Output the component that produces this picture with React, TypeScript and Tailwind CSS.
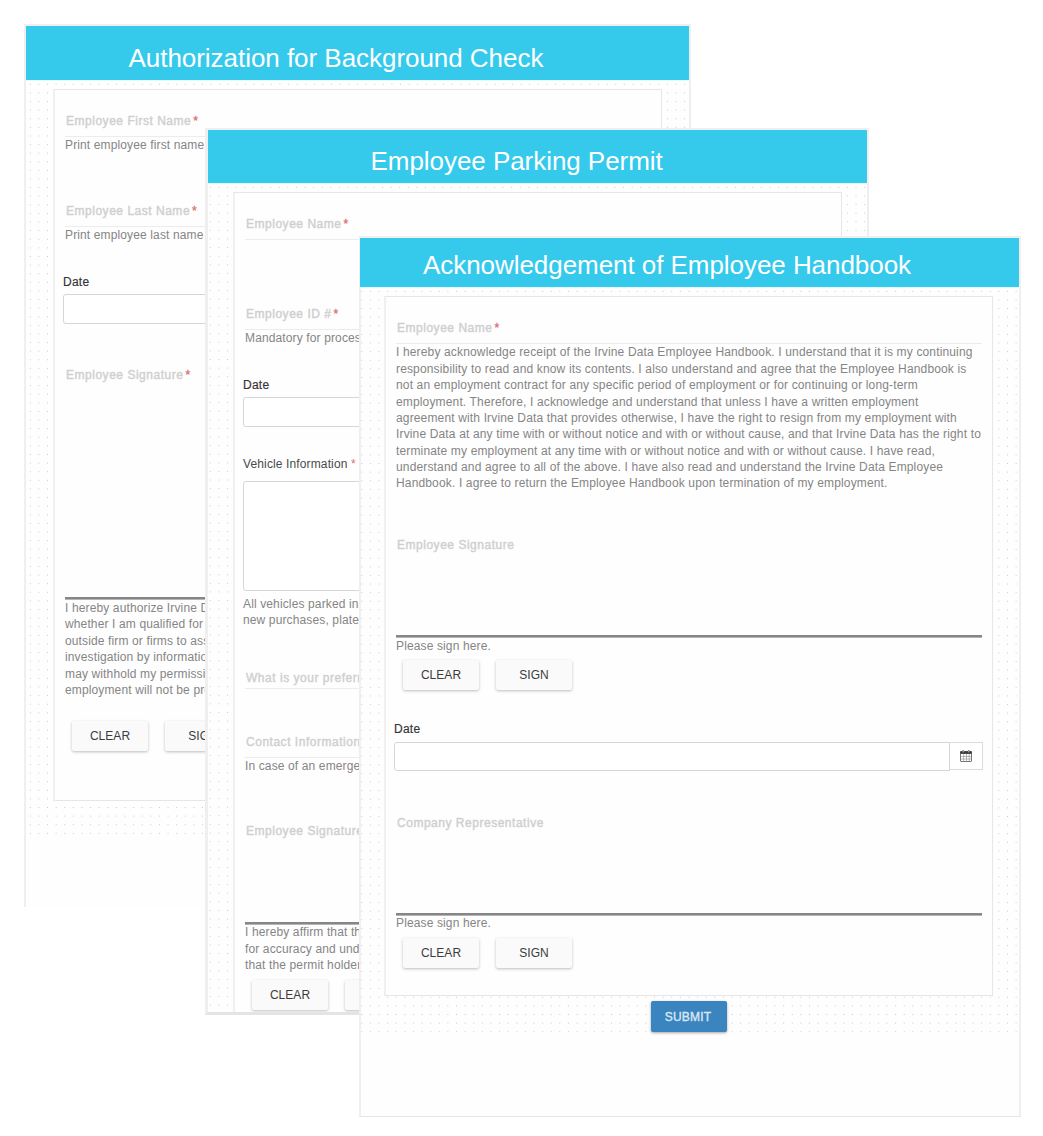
import React from "react";

type Node = React.ReactNode;

const Title = ({ className, children }: { className: string; children: Node }) => (
  <div className={`bg-[#35caec] text-[26px] leading-8 text-white whitespace-nowrap shrink-0 ${className}`}>{children}</div>
);

const Dots = ({ className, children }: { className: string; children: Node }) => (
  <div
    className={`border-t border-[#e6f8fc] bg-[radial-gradient(circle,#c8c8c8_0.3px,transparent_0.93px)] bg-[length:8.62px_8.62px] ${className}`}
  >
    {children}
  </div>
);

const Label = ({ className, required, children }: { className: string; required?: boolean; children: Node }) => (
  <div
    className={`h-4 leading-4 text-[#cfcfcf] [-webkit-text-stroke:0.4px_#cfcfcf] tracking-[0.52px] whitespace-nowrap ${className}`}
  >
    {children}
    {required && <span className="text-[#d9706c] [-webkit-text-stroke:0.3px_#d9706c] ml-[2px]">*</span>}
  </div>
);

const Rule = ({ className }: { className: string }) => <div className={`h-px bg-[#ececec] ${className}`} />;

const SignatureLine = ({ className }: { className: string }) => (
  <div className={`h-[3px] border-b border-[#b4b4b4] bg-[#868686] ${className}`} />
);

const Lines = ({ className, lines }: { className: string; lines: string[] }) => (
  <div className={`text-[#858585] whitespace-nowrap ${className}`}>
    {lines.map((l) => (
      <div key={l} className="h-[16.38px] leading-[16.38px]">{l}</div>
    ))}
  </div>
);

const Help = ({ className, children }: { className: string; children: Node }) => (
  <div className={`h-4 leading-4 text-[#858585] whitespace-nowrap ${className}`}>{children}</div>
);

const Buttons = ({ className }: { className: string }) => (
  <div className={`flex gap-[17px] ${className}`}>
    {["CLEAR", "SIGN"].map((t) => (
      <button
        key={t}
        className="w-[76px] h-[30px] shrink-0 rounded-[2px] bg-[#fafafa] text-[#3c3c3c] tracking-[0.04px] shadow-[0_1px_3px_rgba(0,0,0,0.26)]"
      >
        {t}
      </button>
    ))}
  </div>
);

const Caption = ({ className, children }: { className: string; children: Node }) => (
  <div className={`h-4 leading-4 whitespace-nowrap ${className}`}>{children}</div>
);

const CalendarIcon = () => (
  <svg width="12" height="12" viewBox="0 0 12 12" fill="none">
    <rect x="0.5" y="1.5" width="11" height="10" rx="0.5" stroke="#666" strokeWidth="0.9" />
    <rect x="0.3" y="1.3" width="11.4" height="2.6" fill="#3a3a3a" />
    <path d="M3.7 4v7.5M6.5 4v7.5M9.2 4v7.5M0.5 6.5h11M0.5 9h11" stroke="#888" strokeWidth="0.6" />
    <path d="M3.2 0.2v2.4M8.8 0.2v2.4" stroke="#555" strokeWidth="1.6" />
    <path d="M3.2 0.7v1.6M8.8 0.7v1.6" stroke="#ddd" strokeWidth="0.7" />
  </svg>
);

function BackgroundCheck() {
  return (
    <section className="absolute left-6 top-6 w-[667px] h-[883px] border-2 border-b-0 border-[#efefef] bg-[#fefefe]">
      <Title className="h-[54px] pt-4 pl-[102.5px] tracking-[-0.04px]">Authorization for Background Check</Title>
      <Dots className="h-[759px] pt-2 pl-[27px] bg-position-[0px_-1px]">
        <div className="flex flex-col w-[609px] h-[712px] border border-l-2 border-[#e6e6e6] border-l-[#f0f0f0] bg-[#fefefe]">
          <Label required className="mt-[23px] ml-[11px]">Employee First Name</Label>
          <Rule className="mt-[7px] mx-[10px]" />
          <Help className="ml-[10px]">Print employee first name</Help>
          <Label required className="mt-[50px] ml-[11px]">Employee Last Name</Label>
          <Rule className="mt-[7px] mx-[10px]" />
          <Help className="ml-[10px]">Print employee last name</Help>
          <Caption className="mt-[31px] ml-2 text-[#333] [-webkit-text-stroke:0.15px_#333] tracking-[0.25px]">Date</Caption>
          <div className="mt-1 mx-2 h-[30px] border border-[#d6d6d6] rounded-[3px] bg-white" />
          <Label required className="mt-[43px] ml-[11px]">Employee Signature</Label>
          <SignatureLine className="mt-[214px] mx-[10px]" />
          <Lines
            className="ml-[10px]"
            lines={[
              "I hereby authorize Irvine Data",
              "whether I am qualified for the",
              "outside firm or firms to assist",
              "investigation by information",
              "may withhold my permission",
              "employment will not be pro",
            ]}
          />
          <Buttons className="mt-[23px] ml-[17px]" />
        </div>
      </Dots>
    </section>
  );
}

function ParkingPermit() {
  return (
    <section className="absolute left-[205px] top-[128px] w-[664px] h-[887px] border-2 border-l-3 border-b-3 border-[#efefef] border-b-[#e4e4e4] bg-[#fefefe] overflow-hidden">
      <Title className="h-[53px] pt-[15px] pl-[162.5px] tracking-[-0.05px]">Employee Parking Permit</Title>
      <Dots className="h-[829px] pt-2 pl-[25px] bg-position-[-2px_-1px]">
        <div className="flex flex-col w-[609px] h-[860px] border border-l-2 border-[#e6e6e6] border-l-[#f0f0f0] bg-[#fefefe]">
          <Label required className="mt-[23px] ml-[11px]">Employee Name</Label>
          <Rule className="mt-[7px] mx-[10px]" />
          <Label required className="mt-[66px] ml-[11px]">Employee ID #</Label>
          <Rule className="mt-[7px] mx-[10px]" />
          <Help className="ml-[10px]">Mandatory for processing</Help>
          <Caption className="mt-[31px] ml-2 text-[#333] [-webkit-text-stroke:0.15px_#333] tracking-[0.25px]">Date</Caption>
          <div className="mt-1 mx-2 h-[30px] border border-[#d6d6d6] rounded-[3px] bg-white" />
          <Caption className="mt-[29px] ml-2 text-[#4a4a4a]">
            Vehicle Information<span className="text-[#d9706c]"> *</span>
          </Caption>
          <div className="mt-[9px] mx-2 h-[110px] border border-[#d6d6d6] rounded-[3px] bg-white" />
          <Lines className="mt-[5px] ml-2" lines={["All vehicles parked in the lot", "new purchases, plate changes"]} />
          <Label className="mt-[41px] ml-[11px]">What is your preferred</Label>
          <Rule className="mt-[2px] mx-[10px]" />
          <Label className="mt-[45px] ml-[11px]">Contact Information</Label>
          <Rule className="mt-[7px] mx-[10px]" />
          <Help className="ml-[10px]">In case of an emergency</Help>
          <Label className="mt-[49px] ml-[11px]">Employee Signature</Label>
          <SignatureLine className="mt-[83px] mx-[10px]" />
          <Lines
            className="-mt-[0.6px] ml-[10px]"
            lines={["I hereby affirm that the", "for accuracy and understand", "that the permit holder"]}
          />
          <Buttons className="mt-[6.5px] ml-[17px]" />
        </div>
      </Dots>
    </section>
  );
}

function Handbook() {
  return (
    <section className="absolute left-[359px] top-[236px] w-[662px] h-[881px] border-2 border-b border-[#efefef] border-b-[#e4e4e4] bg-[#fefefe]">
      <Title className="-ml-px h-[49px] pt-[11px] pl-[63px] tracking-[-0.055px]">
        Acknowledgement of Employee Handbook
      </Title>
      <Dots className="h-[749px] pt-2 pl-[23px] bg-position-[-3.5px_-1px]">
        <div className="flex flex-col w-[609px] h-[700px] border border-l-2 border-[#e6e6e6] border-l-[#f0f0f0] bg-[#fefefe]">
          <Label required className="mt-[23px] ml-[11px]">Employee Name</Label>
          <Rule className="mt-[7px] mx-[10px]" />
          <Lines
            className="mt-[0.4px] ml-[10px] tracking-[0.15px]"
            lines={[
              "I hereby acknowledge receipt of the Irvine Data Employee Handbook. I understand that it is my continuing",
              "responsibility to read and know its contents. I also understand and agree that the Employee Handbook is",
              "not an employment contract for any specific period of employment or for continuing or long-term",
              "employment. Therefore, I acknowledge and understand that unless I have a written employment",
              "agreement with Irvine Data that provides otherwise, I have the right to resign from my employment with",
              "Irvine Data at any time with or without notice and with or without cause, and that Irvine Data has the right to",
              "terminate my employment at any time with or without notice and with or without cause. I have read,",
              "understand and agree to all of the above. I have also read and understand the Irvine Data Employee",
              "Handbook. I agree to return the Employee Handbook upon termination of my employment.",
            ]}
          />
          <Label className="mt-[45.18px] ml-[11px]">Employee Signature</Label>
          <SignatureLine className="mt-[82px] mx-[10px]" />
          <Help className="ml-[10px]">Please sign here.</Help>
          <Buttons className="mt-[6px] ml-[17px]" />
          <Caption className="mt-[31px] ml-2 text-[#333] [-webkit-text-stroke:0.15px_#333] tracking-[0.25px]">Date</Caption>
          <div className="mt-[5px] ml-2 mr-[9px] h-[29px] flex">
            <div className="flex-1 border border-[#d6d6d6] rounded-l-[3px] bg-white" />
            <div className="w-[33px] h-7 border border-l-0 border-[#dcdcdc] bg-white flex items-center justify-center">
              <CalendarIcon />
            </div>
          </div>
          <Label className="mt-[44px] ml-[11px]">Company Representative</Label>
          <SignatureLine className="mt-[82px] mx-[10px]" />
          <Help className="-mt-px ml-[10px]">Please sign here.</Help>
          <Buttons className="mt-[7px] ml-[17px]" />
        </div>
        <button className="block mt-[5px] ml-[267px] w-[76px] h-[31px] rounded-[2px] bg-[#3a84c0] text-[#dbe8f3] [-webkit-text-stroke:0.35px_#dbe8f3] tracking-[0.2px] pr-[2px] shadow-[0_1px_3px_rgba(0,0,0,0.35)]">
          SUBMIT
        </button>
      </Dots>
    </section>
  );
}

export default function App() {
  return (
    <main className="relative w-[1043px] h-[1136px] overflow-hidden bg-white font-['Liberation_Sans',Arial,sans-serif] text-xs tracking-[0.13px]">
      <BackgroundCheck />
      <ParkingPermit />
      <Handbook />
    </main>
  );
}
